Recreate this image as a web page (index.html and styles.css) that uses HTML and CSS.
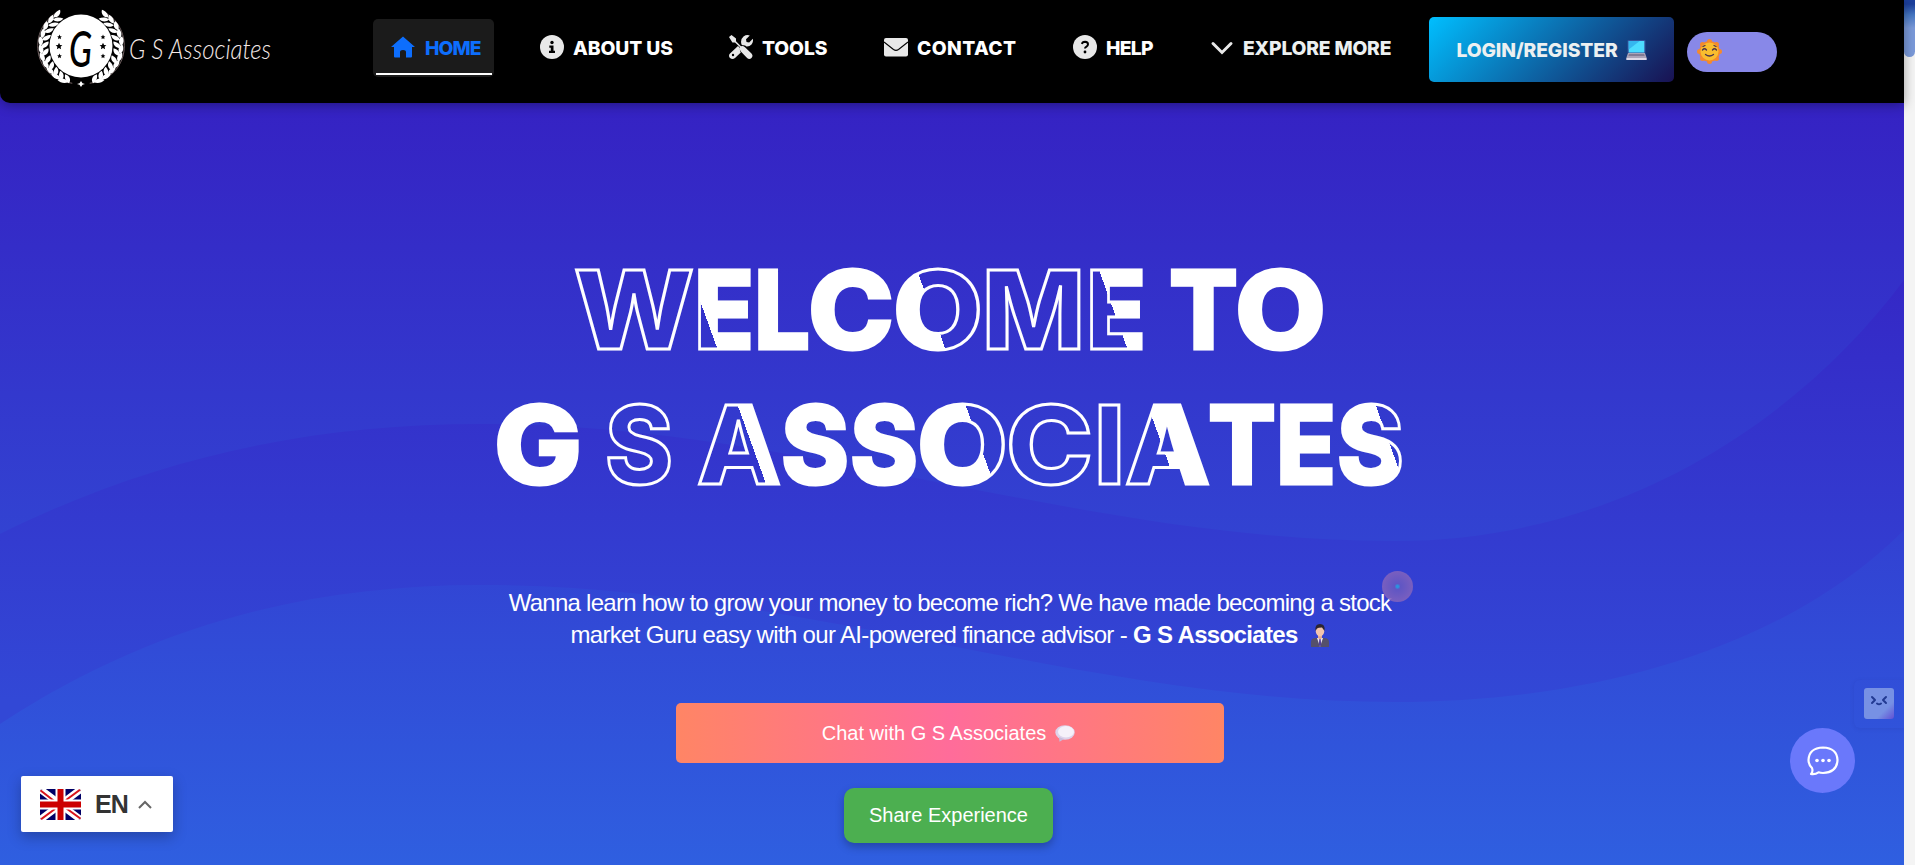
FILE: index.html
```html
<!DOCTYPE html>
<html lang="en">
<head>
<meta charset="utf-8">
<title>G S Associates</title>
<link rel="stylesheet" href="styles.css">
</head>
<body>
<div class="page">
  <header class="navbar">
    <svg class="brand" width="240" height="90" viewBox="0 0 240 90" role="img">
      <defs>
        <path id="leaf" d="M0 0C-1-4 1-7 4-9C6-5 4-1 0 0z"/>
        <path id="star" d="M0-3.2 1-1 3.2-.8 1.5.7 2 3 0 1.8-2 3-1.5.7-3.2-.8-1-1z"/>
        <g id="laurel" fill="#fff">
          <path d="M-8 38C-47 32-48-19-22-34" fill="none" stroke="#8a7777" stroke-width=".8"/>
          <g id="leaves">
            <use href="#leaf" transform="translate(-12 37) rotate(-100)"/>
            <use href="#leaf" transform="translate(-19 34) rotate(-82)"/>
            <use href="#leaf" transform="translate(-25 29) rotate(-68)"/>
            <use href="#leaf" transform="translate(-30 23) rotate(-57)"/>
            <use href="#leaf" transform="translate(-34 16) rotate(-46)"/>
            <use href="#leaf" transform="translate(-36 8) rotate(-36)"/>
            <use href="#leaf" transform="translate(-37 0) rotate(-28)"/>
            <use href="#leaf" transform="translate(-36 -8) rotate(-16)"/>
            <use href="#leaf" transform="translate(-34 -16) rotate(-8)"/>
            <use href="#leaf" transform="translate(-30 -23) rotate(2)"/>
            <use href="#leaf" transform="translate(-25 -29) rotate(12)"/>
            <use href="#leaf" transform="translate(-11 38) rotate(-45)"/>
            <use href="#leaf" transform="translate(-18 35) rotate(-30)"/>
            <use href="#leaf" transform="translate(-24 31) rotate(-16)"/>
            <use href="#leaf" transform="translate(-29 25) rotate(-5)"/>
            <use href="#leaf" transform="translate(-33 18) rotate(5)"/>
            <use href="#leaf" transform="translate(-36 10) rotate(14)"/>
            <use href="#leaf" transform="translate(-37 2) rotate(24)"/>
            <use href="#leaf" transform="translate(-36 -6) rotate(34)"/>
            <use href="#leaf" transform="translate(-34 -14) rotate(42)"/>
            <use href="#leaf" transform="translate(-30 -21) rotate(52)"/>
            <use href="#leaf" transform="translate(-26 -27) rotate(60)"/>
          </g>
        </g>
      </defs>
      <g transform="translate(46 41)">
        <use href="#laurel" transform="scale(1.090 .98)"/><use href="#laurel" transform="scale(-1.090 .98)"/>
        <circle r="31.500" cx="0" cy="0" fill="#fff"/>
        <path d="M0 35l1.500 2.200L4 38l-2.500.8L0 41l-1.500-2.200L-4 38l2.500-.8z" fill="#fff"/>
        <use href="#star" transform="translate(-21.500 -9) scale(.75)"/><use href="#star" transform="translate(-22 0) scale(1.050)"/><use href="#star" transform="translate(-21.500 10) scale(.75)"/>
        <use href="#star" transform="translate(22 -9) scale(.75)"/><use href="#star" transform="translate(22 0) scale(1.050)"/><use href="#star" transform="translate(22 10) scale(.75)"/>
        <text class="monogram" x="-12" y="21" textLength="23" lengthAdjust="spacingAndGlyphs">G</text>
      </g>
      <text class="brand-name" x="94" y="54" textLength="142" lengthAdjust="spacingAndGlyphs">G S Associates</text>
    </svg>

    <nav class="menu">
      <a class="item home"><svg class="ico" viewBox="0 0 24 24"><path d="M12 1.500 0 12h3v9.500q0 1 1 1h5V17q0-2 3-2t3 2v5.500h5q1 0 1-1V12h3z"/></svg><span>HOME</span></a>
      <a class="item about"><svg class="ico" viewBox="0 0 24 24"><circle cx="12" cy="12" r="12"/><circle class="cut" cx="12" cy="7.500" r="1.700"/><path class="cut" d="M9.300 10.500h4.200v5.300H15V18H9v-2.200h1.800v-3.100H9.300z"/></svg><span>ABOUT US</span></a>
      <a class="item tools"><svg class="ico" viewBox="0 0 24 24"><path d="M0 2 2.500 0 7 3.500v2.800l5 5q1.800-.8 4 .9l6.500 6.300q2 2.300 0 4.500-2.200 1.800-4.400 0l-6-6.200q-1.900-2.300-1-4.500L6 7.500H3.400z"/><path d="M1 18.500 9 11l2 2q-.5 2.500.8 4.500L6 23q-2.500 2-5 0-2-2.300 0-4.500zM12.500 9.500Q11 4.500 14.500 1.500 17.500-.7 20.800.4L17 4.200l.5 2.800 2.700.5 3.600-3.700q.8 3-1.300 5.600-2 2.200-5 2-1.800-1.700-4-1.100z"/><circle class="cut" cx="4" cy="20" r="1.200"/></svg><span>TOOLS</span></a>
      <a class="item contact"><svg class="ico" viewBox="0 0 24 24"><rect y="3" width="24" height="18.500" rx="2"/><path d="M0 7l9.500 7.500q2.500 1.800 5 0L24 7" fill="none" stroke="#000" stroke-width="1.100"/></svg><span>CONTACT</span></a>
      <a class="item help"><svg class="ico" viewBox="0 0 24 24"><circle cx="12" cy="12" r="12"/><path d="M9 9q.3-2.200 3-2.200 3 .2 3 2.500 0 1.500-1.500 2.300-1.500.8-1.500 2" fill="none" stroke="#000" stroke-width="2"/><circle class="cut" cx="12" cy="17" r="1.400"/></svg><span>HELP</span></a>
      <a class="item more"><svg class="ico" viewBox="0 0 24 24"><path d="M3 8.500 12 17.500l9-9" fill="none" stroke="#e8e8e8" stroke-width="3" stroke-linecap="round"/></svg><span>EXPLORE MORE</span></a>
    </nav>

    <a class="login"><span>LOGIN/REGISTER</span>
      <svg width="21" height="20" viewBox="0 0 21 20"><rect x="1.500" width="18" height="13" rx="1" fill="#35539c"/><rect x="2.700" y="1" width="15.600" height="11.500" fill="#4cdcff"/><path d="M2.700 9.500V1h11z" fill="#35b6ef"/><path d="M2 13h17l1.700 5H.3z" fill="#aaa3b8"/><path d="M3 14h15l.7 2H2.400z" fill="#827b94"/><path d="M.3 18h20.400v2H.3z" fill="#ded9e8"/></svg>
    </a>
    <div class="theme">
      <svg width="25" height="25" viewBox="-12.500 -12.500 25 25"><g fill="#f58a2c"><circle r="10.500"/><circle cx="0" cy="-10" r="2.500"/><circle cx="7" cy="-7" r="2.500"/><circle cx="10" r="2.500"/><circle cx="7" cy="7" r="2.500"/><circle cy="10" r="2.500"/><circle cx="-7" cy="7" r="2.500"/><circle cx="-10" r="2.500"/><circle cx="-7" cy="-7" r="2.500"/></g><circle r="9" fill="#f9bd2e"/><g fill="none" stroke="#4d344c" stroke-width="1.300" stroke-linecap="round"><path d="M-7-1.500q2-2.500 4 0M3-1.500q2-2.500 4 0M-4 3q4 3 8 0M-6.500-5l2-1M6.500-5l-2-1"/></g></svg>
    </div>
  </header>

  <main class="hero">
    <svg class="waves" width="1904" height="865" viewBox="0 0 1904 865">
      <defs>
        <linearGradient id="w1" gradientUnits="userSpaceOnUse" x1="0" y1="200" x2="0" y2="700"><stop offset="0" stop-color="#3522c3"/><stop offset="1" stop-color="#3248d6"/></linearGradient>
        <linearGradient id="w2" gradientUnits="userSpaceOnUse" x1="0" y1="530" x2="0" y2="865"><stop offset="0" stop-color="#3241d2"/><stop offset="1" stop-color="#2f5fe0"/></linearGradient>
      </defs>
      <path fill="url(#w1)" d="M0 534C160 454 320 424 480 424C800 424 1080 541 1395 541C1620 541 1800 420 1904 280V865H0z"/>
      <path fill="url(#w2)" d="M0 724C160 619 320 585 480 585C800 585 1080 702 1395 702C1620 702 1800 635 1904 530V865H0z"/>
    </svg>
    <svg class="title" width="920" height="240" viewBox="490 260 920 240">
      <defs>
        <linearGradient id="sweep" gradientUnits="userSpaceOnUse" x1="703" y1="310" x2="1066" y2="179.300" spreadMethod="repeat">
          <stop offset="0" stop-color="#fff"/><stop offset=".556" stop-color="#fff"/><stop offset=".556" stop-color="#fff" stop-opacity="0"/><stop offset="1" stop-color="#fff" stop-opacity="0"/>
        </linearGradient>
      </defs>
      <text y="349.500"><tspan x="574" textLength="120" lengthAdjust="spacingAndGlyphs">W</tspan><tspan x="694" textLength="60" lengthAdjust="spacingAndGlyphs">E</tspan><tspan x="754" textLength="56" lengthAdjust="spacingAndGlyphs">L</tspan><tspan x="808" textLength="86" lengthAdjust="spacingAndGlyphs">C</tspan><tspan x="893" textLength="90" lengthAdjust="spacingAndGlyphs">O</tspan><tspan x="982" textLength="103" lengthAdjust="spacingAndGlyphs">M</tspan><tspan x="1086" textLength="60" lengthAdjust="spacingAndGlyphs">E</tspan> <tspan x="1169" textLength="69" lengthAdjust="spacingAndGlyphs">T</tspan><tspan x="1235" textLength="91" lengthAdjust="spacingAndGlyphs">O</tspan></text>
      <text y="484.500"><tspan class="solid" x="494" textLength="88" lengthAdjust="spacingAndGlyphs">G</tspan> <tspan x="605" textLength="68" lengthAdjust="spacingAndGlyphs">S</tspan> <tspan x="697" textLength="84" lengthAdjust="spacingAndGlyphs">A</tspan><tspan x="781" textLength="68" lengthAdjust="spacingAndGlyphs">S</tspan><tspan x="850" textLength="68" lengthAdjust="spacingAndGlyphs">S</tspan><tspan x="917" textLength="91" lengthAdjust="spacingAndGlyphs">O</tspan><tspan x="1006" textLength="87" lengthAdjust="spacingAndGlyphs">C</tspan><tspan x="1094" textLength="31" lengthAdjust="spacingAndGlyphs">I</tspan><tspan x="1125" textLength="85" lengthAdjust="spacingAndGlyphs">A</tspan><tspan x="1208" textLength="68" lengthAdjust="spacingAndGlyphs">T</tspan><tspan x="1276" textLength="60" lengthAdjust="spacingAndGlyphs">E</tspan><tspan x="1337" textLength="67" lengthAdjust="spacingAndGlyphs">S</tspan></text>
    </svg>
    <p class="lead">Wanna learn how to grow your money to become rich? We have made becoming a stock<br><span class="second">market Guru easy with our AI-powered finance advisor - <b>G S Associates</b></span>
      <svg width="20" height="23" viewBox="0 0 20 23"><path d="M1 23v-5q0-4 5-4h8q5 0 5 4v5z" fill="#55506b"/><path d="M7 14h6l-3 9z" fill="#ede6f2"/><path d="M9.300 15h1.400l.6 6-1.300 1.500L8.700 21z" fill="#54409c"/><path d="M8 10h4v4l-2 1.500L8 14z" fill="#e0aa91"/><ellipse cx="10" cy="7" rx="4.300" ry="5.400" fill="#f2c4ad"/><path d="M5.500 7Q4.500 0 10 0t4.500 7L12 3.500q-4 0-5 1z" fill="#2c2430"/></svg></p>
    <a class="chat-cta"><span>Chat with G S Associates</span>
      <svg width="20" height="17" viewBox="0 0 20 17"><ellipse cx="10" cy="7.500" rx="9.700" ry="7.300" fill="#ddd3ea"/><path d="M4 12l.5 4.800L9 14z" fill="#c9bcdc"/><ellipse cx="11" cy="6.700" rx="8" ry="5.700" fill="#f5f1fa"/></svg></a>
    <a class="share">Share Experience</a>
  </main>

  <i class="cursor"></i>
  <div class="lang">
    <svg width="41" height="31" viewBox="0 0 41 31"><defs><clipPath id="flag"><rect width="41" height="31" rx="3"/></clipPath></defs><g clip-path="url(#flag)"><path fill="#006" d="M0 0h41v31H0z"/><path d="M0 0 41 31M41 0 0 31" stroke="#fff" stroke-width="7"/><path d="M0 1 18 15M41 0 22 14M0 31 19 17M41 30 23 17" stroke="#d8141c" stroke-width="2"/><path d="M20.500 0v31M0 15.500h41" stroke="#fff" stroke-width="10"/><path d="M20.500 0v31M0 15.500h41" stroke="#c00" stroke-width="6"/></g></svg>
    <b>EN</b>
    <svg width="14" height="9" viewBox="0 0 14 9"><path d="M1 8l6-6 6 6" fill="none" stroke="#666" stroke-width="2"/></svg>
  </div>
  <div class="bot-tab"><svg width="30" height="31" viewBox="0 0 30 31"><g fill="none" stroke="#223a92" stroke-width="2" stroke-linecap="round" stroke-linejoin="round"><path d="M8 9l3 3-3 3M22 9l-3 3 3 3M13 15.500q2 1.500 4 0"/></g></svg></div>
  <div class="chat-fab"><svg width="32" height="30" viewBox="0 0 32 30"><path d="M5 22Q1.500 18.500 1.500 14 2 2 16 1.500 30 2 30.500 14 30 26.500 16 27q-2.500 0-4.500-.7Q8 28.800 4 28q2.300-2.200 1-6z" fill="none" stroke="#fff" stroke-width="2.200" stroke-linejoin="round"/><g fill="#fff"><circle cx="10" cy="14.500" r="1.800"/><circle cx="16" cy="14.500" r="1.800"/><circle cx="22" cy="14.500" r="1.800"/></g></svg></div>
  <div class="scrollbar"><div class="thumb"></div></div>
</div>
</body>
</html>
```
FILE: styles.css
```css
* { box-sizing: border-box; }
body { margin: 0; overflow: hidden; }
.page {
  position: relative;
  width: 1915px;
  height: 865px;
  overflow: hidden;
  background: linear-gradient(#3522c3 100px, #3243d2 541px);
  font-family: "Liberation Sans", Arial, sans-serif;
}

/* top bar */
.navbar {
  position: relative;
  z-index: 2;
  display: flex;
  align-items: flex-start;
  width: 1904px;
  height: 103px;
  padding-left: 35px;
  background: #000;
  border-radius: 0 0 0 10px;
  box-shadow: 0 2px 12px rgba(0, 0, 0, .35);
}
.brand { flex: none; margin-top: 5px; overflow: visible; }
.monogram { font: italic 500 50px Lato, sans-serif; fill: #000; }
.brand-name { font: italic 300 28px Lato, sans-serif; fill: #f4e8e6; }
.menu { display: flex; margin: 19px 0 0 98px; height: 58px; }
.item {
  display: flex;
  align-items: center;
  flex: none;
  height: 58px;
  color: #fff;
  font: 800 19.300px Inter, sans-serif;
  letter-spacing: -.1px;
  white-space: nowrap;
}
.item .ico { width: 24px; height: 24px; margin: 0 9px 3px 0; fill: #e8e8e8; flex: none; }
.item .cut { fill: #000; }
.home {
  width: 121px;
  padding-left: 18px;
  border-radius: 5px;
  background: linear-gradient(#fff, #fff) 3px 54px / 116px 2px no-repeat #1b1b1b;
  color: #0d6efd;
  letter-spacing: -.9px;
}
.home .ico { fill: #0d6efd; margin-right: 10px; }
.about { margin-left: 46px; width: 189px; }
.tools { width: 155px; }
.contact { width: 189px; letter-spacing: .4px; }
.help { width: 137px; letter-spacing: -.7px; }
.more { width: 219px; color: #ecf0f1; letter-spacing: -.2px; }
.login {
  display: flex;
  align-items: center;
  justify-content: center;
  gap: 8px;
  flex: none;
  width: 245px;
  height: 65px;
  margin: 17px 13px 0 0;
  border-radius: 5px;
  background: linear-gradient(135deg, #00bfff, #191152);
  color: #ecf0f1;
  font: 800 19.300px Inter, sans-serif;
  letter-spacing: -.1px;
}
.theme {
  display: flex;
  align-items: center;
  flex: none;
  width: 90px;
  height: 40px;
  margin-top: 32px;
  padding: 0 0 2px 10px;
  border-radius: 20px;
  background: #8888e8;
}

/* hero */
.hero {
  display: flex;
  flex-direction: column;
  align-items: center;
  width: 1904px;
  padding: 156px 4px 0 0;
}
.waves { position: absolute; left: 0; top: 0; }
.title, .lead, .chat-cta, .share { position: relative; }
.title { display: block; flex: none; overflow: visible; }
.title text {
  font: 800 109px Inter, sans-serif;
  fill: url(#sweep);
  stroke: #fff;
  stroke-width: 3px;
}
.title .solid { fill: #fff; }
.lead {
  margin: 88px 0 0;
  color: #fff;
  font-size: 24px;
  line-height: 32px;
  text-align: center;
  letter-spacing: -.74px;
  white-space: nowrap;
}
.lead .second { letter-spacing: -.66px; }
.lead svg { vertical-align: -4px; margin-left: 6px; }
.chat-cta {
  display: flex;
  align-items: center;
  justify-content: center;
  gap: 9px;
  width: 548px;
  height: 60px;
  margin-top: 52px;
  padding-right: 3px;
  border-radius: 5px;
  background: linear-gradient(90deg, #ff8565, #ff6c9a 50%, #ff8565);
  color: #fff;
  font-size: 20px;
}
.share {
  width: 209px;
  height: 55px;
  margin-top: 25px;
  margin-right: 3px;
  border-radius: 10px;
  background: #4caf50;
  box-shadow: 0 4px 8px rgba(0, 0, 0, .25);
  color: #fff;
  font-size: 20px;
  line-height: 54px;
  text-align: center;
}

/* floating widgets */
.cursor {
  position: absolute;
  left: 1382px;
  top: 571px;
  width: 31px;
  height: 31px;
  border-radius: 50%;
  background: radial-gradient(circle, #2b9ce0 0 1px, #6558c2 3px, #8062bd 15px);
  opacity: .9;
}
.lang {
  position: absolute;
  left: 21px;
  top: 776px;
  display: flex;
  align-items: center;
  width: 152px;
  height: 56px;
  padding-left: 19px;
  border-radius: 2px;
  background: #fff;
  box-shadow: 0 5px 14px rgba(0, 0, 0, .25);
  color: #333;
}
.lang b { margin: 0 10px 0 14px; font-size: 25px; letter-spacing: -1px; }
.bot-tab {
  position: absolute;
  left: 1854px;
  top: 680px;
  width: 50px;
  height: 48px;
  padding: 8px 0 0 10px;
  border-radius: 6px 0 0 6px;
  box-shadow: 0 1px 4px rgba(30, 30, 120, .12);
}
.bot-tab svg { display: block; border-radius: 3px; background: linear-gradient(135deg, #7791e4 70%, #6150d4); }
.chat-fab {
  position: absolute;
  left: 1790px;
  top: 728px;
  display: flex;
  align-items: center;
  justify-content: center;
  width: 65px;
  height: 65px;
  border-radius: 50%;
  background: #6a78fb;
}
.scrollbar { position: absolute; right: 0; top: 0; width: 11px; height: 865px; background: #f4f4f4; }
.thumb { height: 57px; border-radius: 0 0 6px 6px; background: linear-gradient(#1c3f9c 4px, #4677c3 15px, #7a99d9 28px); }
```
